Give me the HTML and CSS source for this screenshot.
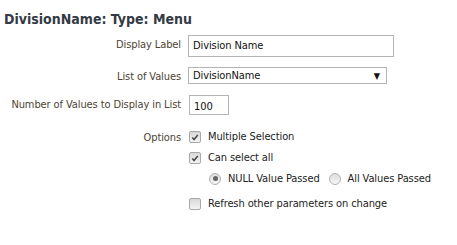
FILE: index.html
```html
<!DOCTYPE html>
<html lang="en">
<head>
  <meta charset="UTF-8">
  <meta name="viewport" content="width=device-width, initial-scale=1.0">
  <title>DivisionName: Type: Menu</title>
  <link rel="stylesheet" href="styles.css">
</head>
<body>
  <h1 class="title">DivisionName: Type: Menu</h1>

  <div class="form">
    <div class="label row-label">Display Label</div>
    <div class="field row-label">
      <div class="text-input wide">Division Name</div>
    </div>

    <div class="label row-list">List of Values</div>
    <div class="field row-list">
      <div class="select">
        <span>DivisionName</span>
        <span class="arrow">&#9660;</span>
      </div>
    </div>

    <div class="label row-num">Number of Values to Display in List</div>
    <div class="field row-num">
      <div class="text-input short">100</div>
    </div>

    <div class="label row-opt">Options</div>
    <div class="field row-opt options">
      <div class="option">
        <span class="check on"><svg viewBox="0 0 13 13" width="13" height="13"><path d="M3.5 6.5 L5.5 8.7 L9.5 3.8" fill="none" stroke="#484848" stroke-width="1.7"/></svg></span>
        <span>Multiple Selection</span>
      </div>
      <div class="option">
        <span class="check on"><svg viewBox="0 0 13 13" width="13" height="13"><path d="M3.5 6.5 L5.5 8.7 L9.5 3.8" fill="none" stroke="#484848" stroke-width="1.7"/></svg></span>
        <span>Can select all</span>
      </div>
      <div class="option radios">
        <span class="radio on"></span>
        <span class="radio-text">NULL Value Passed</span>
        <span class="radio"></span>
        <span>All Values Passed</span>
      </div>
      <div class="option refresh">
        <span class="check"></span>
        <span>Refresh other parameters on change</span>
      </div>
    </div>
  </div>
</body>
</html>
```

FILE: styles.css
```css
body {
  margin: 0;
  padding: 0 4px;
  font-family: Tahoma, "DejaVu Sans Condensed", "Liberation Sans", sans-serif;
  font-size: 11px;
  letter-spacing: -0.1px;
  color: #222;
  background: #fff;
}
.title {
  margin: 0;
  padding-top: 10px;
  font-size: 14px;
  font-weight: bold;
  color: #333a44;
  line-height: 18px;
  letter-spacing: 0;
}
.form {
  display: grid;
  grid-template-columns: 177px 1fr;
  column-gap: 7px;
  margin-top: 7px;
}
.label {
  text-align: right;
  color: #4d4433;
  line-height: 13px;
}
.row-label.label { padding-top: 3px; }
.row-list.label { padding-top: 3px; margin-top: 10px; }
.row-list.field { margin-top: 10px; }
.row-num.label { padding-top: 3px; margin-top: 11px; }
.row-num.field { margin-top: 11px; }
.row-opt.label { padding-top: 1px; margin-top: 15px; }
.row-opt.field { margin-top: 15px; }

.text-input {
  box-sizing: border-box;
  border: 1px solid #b4b4b4;
  background: #fff;
  color: #111;
  padding: 0 4px;
}
.wide {
  width: 206px;
  height: 22px;
  line-height: 20px;
}
.short {
  width: 40px;
  height: 20px;
  line-height: 22px;
  margin-left: 1px;
}
.select {
  box-sizing: border-box;
  width: 199px;
  height: 17px;
  border: 1px solid #b4b4b4;
  display: flex;
  justify-content: space-between;
  align-items: center;
  padding: 0 6px 0 4px;
  color: #111;
}
.arrow {
  font-size: 9px;
  color: #111;
}
.option {
  display: flex;
  align-items: center;
  gap: 7px;
  height: 13px;
  margin-bottom: 8px;
  color: #222;
}
.check {
  box-sizing: border-box;
  width: 12px;
  height: 12px;
  margin-left: 1px;
  border: 1px solid #a8a8a8;
  border-radius: 2px;
  background: linear-gradient(#d8d8d8, #f4f4f4);
  display: inline-flex;
}
.check svg {
  margin: -1px;
}
.radios {
  margin-top: 2px;
  margin-left: 21px;
  margin-bottom: 12px;
}
.radio {
  box-sizing: border-box;
  width: 12px;
  height: 12px;
  border: 1px solid #b0b0b0;
  border-radius: 50%;
  background: linear-gradient(#dedede, #f6f6f6);
  display: inline-flex;
  align-items: center;
  justify-content: center;
}
.radio.on::after {
  content: "";
  width: 5px;
  height: 5px;
  border-radius: 50%;
  background: #666;
}
.radio-text {
  margin-right: 2px;
}
```
